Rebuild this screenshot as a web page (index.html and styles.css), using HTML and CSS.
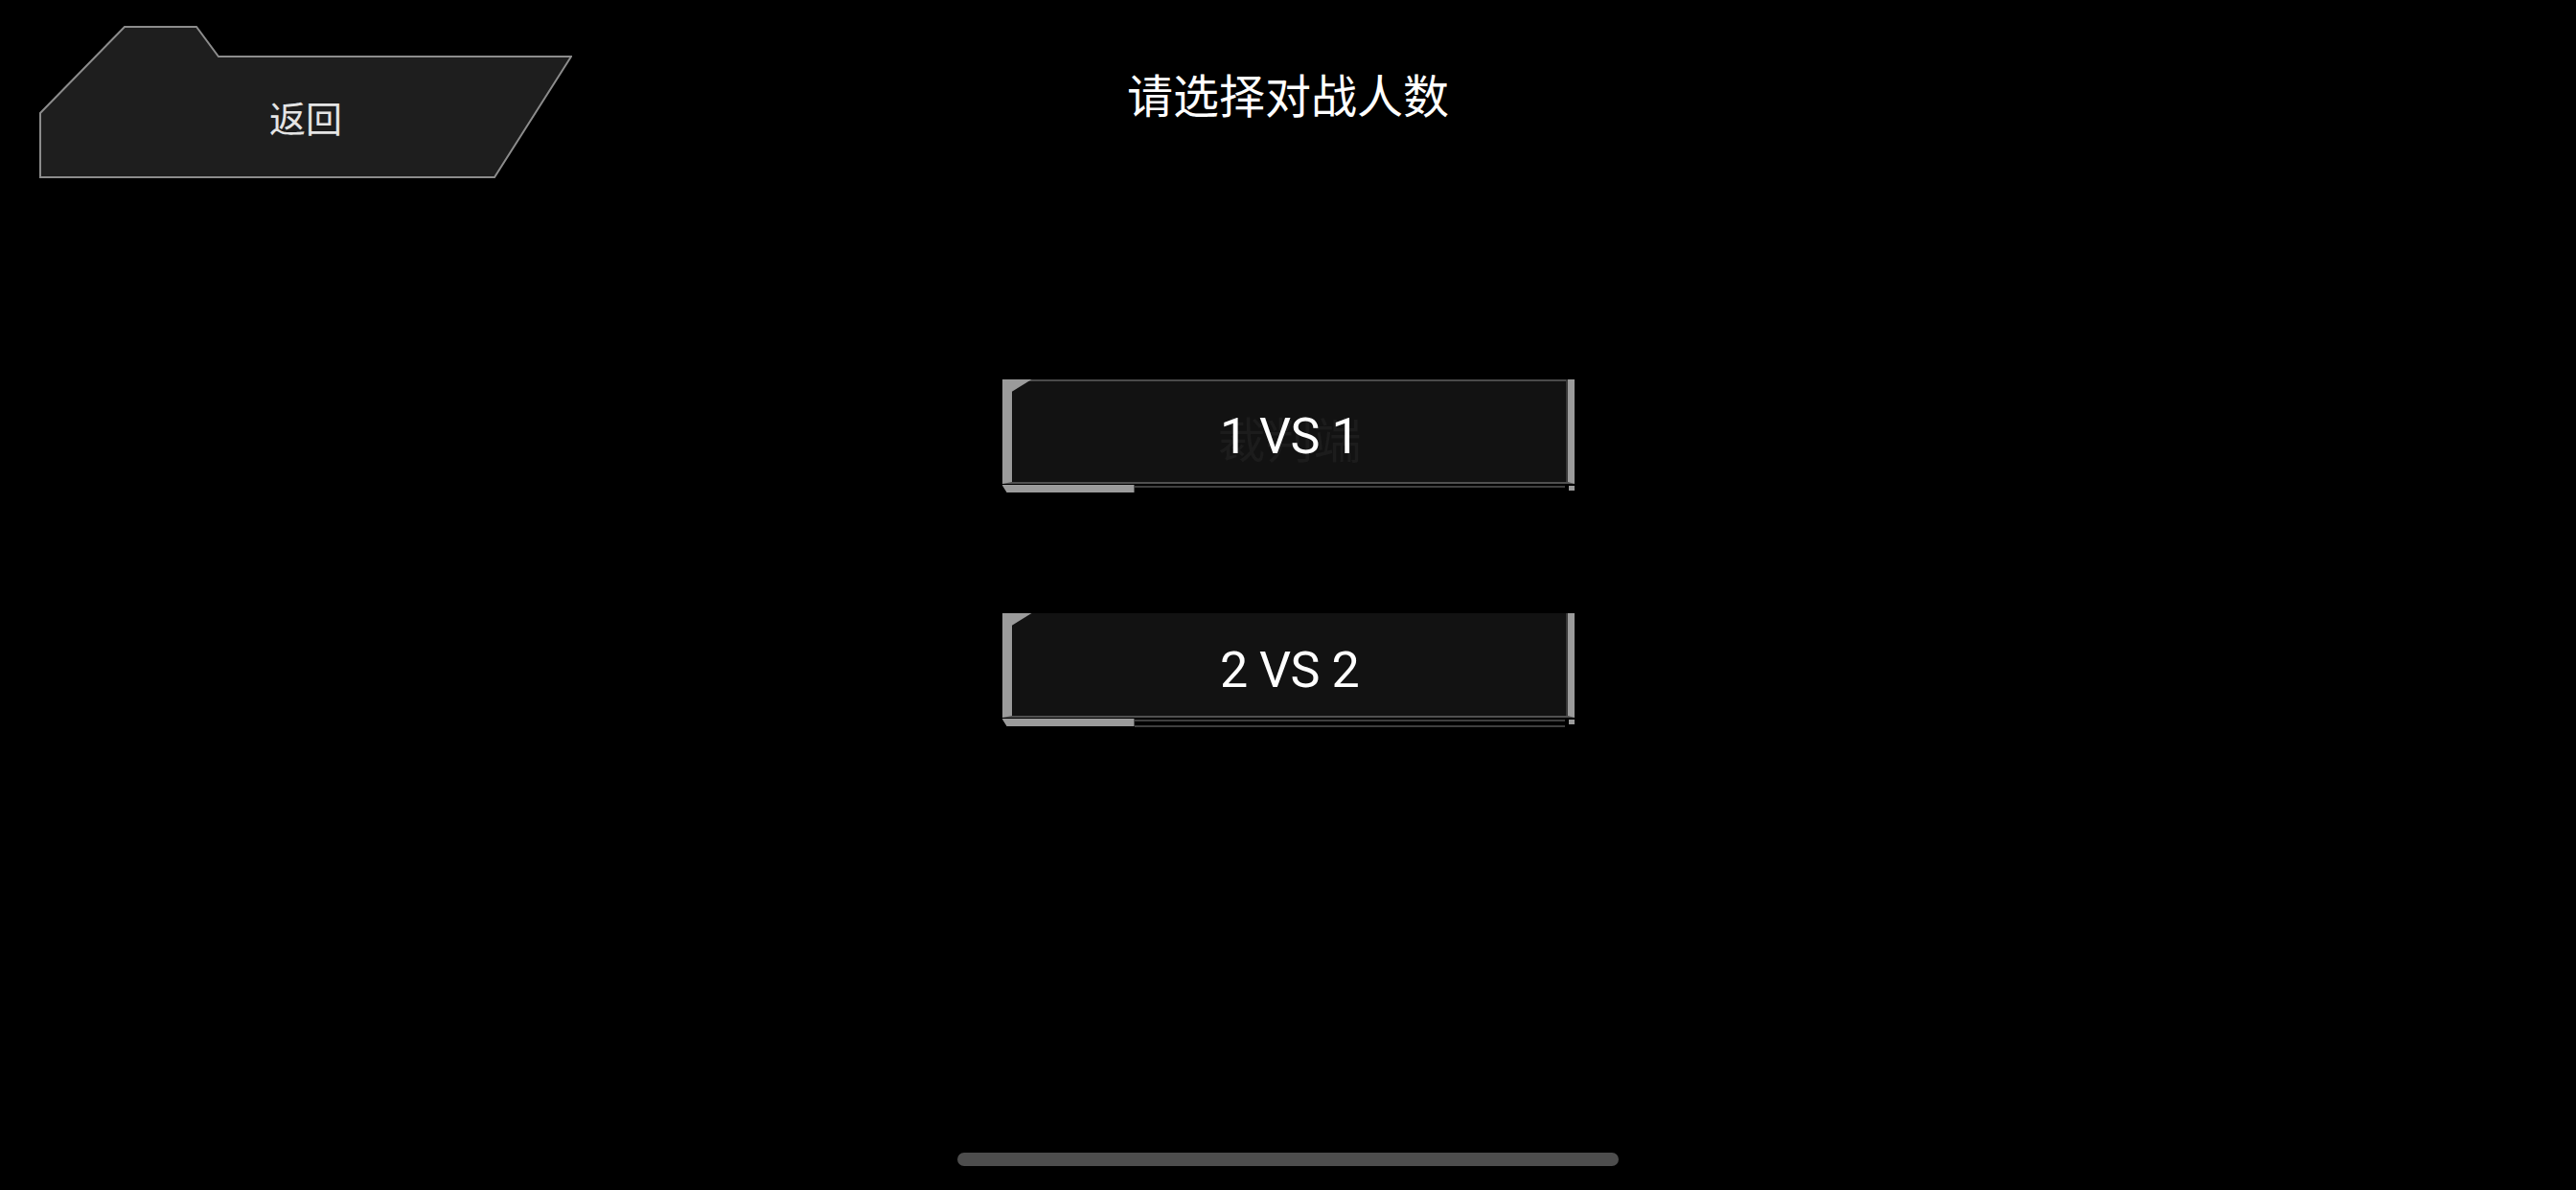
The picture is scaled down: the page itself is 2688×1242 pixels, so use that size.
FILE: index.html
```html
<!DOCTYPE html>
<html lang="zh-CN">
<head>
  <meta charset="UTF-8">
  <meta name="viewport" content="width=device-width, initial-scale=1.0">
  <title>选择对战人数</title>
  <link rel="stylesheet" href="styles.css">
</head>
<body>
  <div class="screen">
    <div class="topbar">
      <div class="back">
        <!-- 뒤로가기 버튼 모양 -->
        <svg width="556" height="159" viewBox="0 0 556 159">
          <polygon points="1,91 89,1 164,1 187,32 555,32 475,158 1,158" fill="#1e1e1e" stroke="#8c8c8c" stroke-width="2"/>
        </svg>
        <span>返回</span>
      </div>
      <h1 class="title">请选择对战人数</h1>
      <div></div>
    </div>

    <div class="modes">
      <div class="mode mode--lined">
        <div class="mode-face">
          <div class="mode-label">
            <span class="ghost">裁判端</span>
            <span>1 VS 1</span>
          </div>
        </div>
        <div class="mode-base">
          <div class="base-fill"></div>
          <div class="base-track"></div>
          <div class="base-cap"></div>
        </div>
      </div>

      <div class="mode mode--double">
        <div class="mode-face">
          <div class="mode-label">
            <span>2 VS 2</span>
          </div>
        </div>
        <div class="mode-base">
          <div class="base-fill"></div>
          <div class="base-track"></div>
          <div class="base-cap"></div>
        </div>
      </div>
    </div>

    <div class="home-bar"></div>
  </div>
</body>
</html>
```

FILE: styles.css
```css
*{
  box-sizing: border-box;
}
body{
  margin: 0;
  background-color: #000;
  color: #fff;
  font-family: "Noto Sans CJK SC", sans-serif;
}
.screen{
  min-height: 100vh;
  display: flex;
  flex-direction: column;
}
.topbar{
  display: grid;
  grid-template-columns: 1fr auto 1fr;
  align-items: start;
  padding: 27px 41px 0;
}
.back{
  position: relative;
  width: 556px;
  height: 159px;
  padding-top: 30px;
  display: flex;
  align-items: center;
  justify-content: center;
  font-size: 38px;
  color: #e4e4e4;
  cursor: pointer;
}
.back svg{
  position: absolute;
  top: 0;
  left: 0;
}
.back span{
  position: relative;
}
.title{
  margin: 37px 0 0;
  font-size: 48px;
  font-weight: 400;
  line-height: 66px;
}
.modes{
  display: flex;
  flex-direction: column;
  align-items: center;
  gap: 126px;
  padding-top: 210px;
}
.mode{
  width: 597px;
}
.mode-face{
  position: relative;
  height: 109px;
  padding-top: 13px;
  display: flex;
  align-items: center;
  justify-content: center;
  background-color: #121212;
  border-left: 10px solid #9b9b9b;
  border-right: 7px solid #9b9b9b;
  border-bottom: 2px solid #505050;
  box-shadow: inset -2px 0 0 #383838;
}
.mode--lined .mode-face{
  box-shadow: inset -2px 0 0 #383838, inset 0 2px 0 #4a4a4a;
}
/* 왼쪽 위 모서리 삼각형 */
.mode-face::before{
  content: '';
  position: absolute;
  top: 0;
  left: 0;
  width: 21px;
  height: 13px;
  background-color: #9b9b9b;
  clip-path: polygon(0 0, 100% 0, 0 100%);
}
.mode-label{
  display: grid;
  place-items: center;
  font-family: Roboto, "Noto Sans CJK SC", sans-serif;
  font-size: 52px;
  line-height: 1;
  letter-spacing: -0.5px;
}
.mode-label>span{
  grid-area: 1 / 1;
}
.ghost{
  color: #1c1c1c;
  font-family: "Noto Sans CJK SC", sans-serif;
  font-size: 50px;
  letter-spacing: 0;
}
.mode-base{
  display: flex;
  height: 8px;
  margin-top: 1px;
}
.base-fill{
  width: 138px;
  background-color: #9b9b9b;
  clip-path: polygon(0 0, 100% 0, 100% 100%, 5px 100%);
}
.base-track{
  flex: 1;
  height: 3px;
  margin: 1px 4px 0 0;
  border-top: 2px solid #3e3e3e;
}
.mode--double .base-track{
  height: 8px;
  border-bottom: 2px solid #3e3e3e;
}
.base-cap{
  width: 6px;
  height: 5px;
  margin-top: 1px;
  background-color: #9b9b9b;
}
.home-bar{
  width: 690px;
  height: 14px;
  margin: auto auto 25px;
  border-radius: 7px;
  background-color: #4d4d4d;
}
```
